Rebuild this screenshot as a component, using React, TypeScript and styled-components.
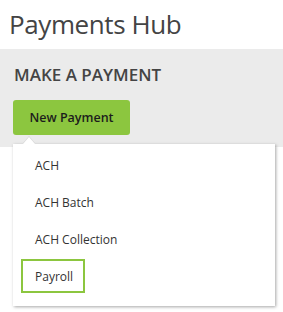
import React from "react";
import styled, { createGlobalStyle } from "styled-components";

const Global = createGlobalStyle`
  html, body { margin: 0; padding: 0; background: #fff; }
  body { font-family: "Open Sans", "Noto Sans", sans-serif; }
`;

const Page = styled.div`
  width: 283px;
  height: 312px;
  overflow: hidden;
`;

const Title = styled.h1`
  margin: 0;
  padding: 6px 0 0 9px;
  height: 49px;
  box-sizing: border-box;
  font-size: 26px;
  font-weight: 400;
  letter-spacing: -0.4px;
  color: #444;
  line-height: 36px;
`;

const Band = styled.section`
  background: #ebebeb;
  height: 98px;
  padding: 14px 0 0 13px;
  box-sizing: border-box;
`;

const SectionTitle = styled.h2`
  margin: 0 0 0 1px;
  font-size: 17px;
  font-weight: 600;
  color: #444;
  line-height: 24px;
`;

const MenuWrap = styled.div`
  position: relative;
  margin-top: 13px;
`;

const GreenButton = styled.button`
  display: block;
  width: 117px;
  height: 35px;
  border: none;
  border-radius: 3px;
  background: #8cc63f;
  color: #1c1c1c;
  font-family: inherit;
  font-size: 12.5px;
  font-weight: 600;
  padding: 0;
`;

const Dropdown = styled.ul`
  position: absolute;
  left: 0;
  top: 44px;
  width: 262px;
  margin: 0;
  padding: 4px 0 13px 8px;
  list-style: none;
  display: flex;
  flex-direction: column;
  align-items: flex-start;
  gap: 3px;
  background: #fff;
  box-shadow: 1px 1px 3px rgba(0, 0, 0, 0.35);
  box-sizing: border-box;
  &::before {
    content: "";
    position: absolute;
    left: 10px;
    top: -7px;
    border-left: 6px solid transparent;
    border-right: 6px solid transparent;
    border-bottom: 7px solid #fff;
    filter: drop-shadow(0 -1px 0 rgba(0, 0, 0, 0.08));
  }
`;

const Item = styled.li<{ $active?: boolean }>`
  display: flex;
  align-items: center;
  height: 34px;
  padding: 0 10px 0 12px;
  box-sizing: border-box;
  border: 2px solid ${(p) => (p.$active ? "#8cc63f" : "transparent")};
  font-size: 12px;
  color: #333;
`;

const items = ["ACH", "ACH Batch", "ACH Collection", "Payroll"];

export default function App() {
  return (
    <Page>
      <Global />
      <Title>Payments Hub</Title>
      <Band>
        <SectionTitle>MAKE A PAYMENT</SectionTitle>
        <MenuWrap>
          <GreenButton>New Payment</GreenButton>
          <Dropdown>
            {items.map((label) => (
              <Item key={label} $active={label === "Payroll"}>
                {label}
              </Item>
            ))}
          </Dropdown>
        </MenuWrap>
      </Band>
    </Page>
  );
}
